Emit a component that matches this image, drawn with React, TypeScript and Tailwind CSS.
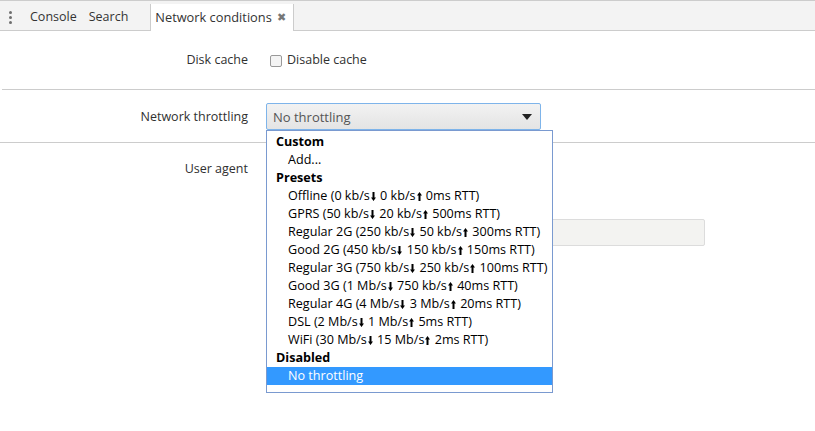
import { Fragment } from 'react';

type Row = { label: string; kind: 'group' | 'item'; selected?: boolean };

const options: Row[] = [
  { label: 'Custom', kind: 'group' },
  { label: 'Add...', kind: 'item' },
  { label: 'Presets', kind: 'group' },
  { label: 'Offline (0 kb/s⬇ 0 kb/s⬆ 0ms RTT)', kind: 'item' },
  { label: 'GPRS (50 kb/s⬇ 20 kb/s⬆ 500ms RTT)', kind: 'item' },
  { label: 'Regular 2G (250 kb/s⬇ 50 kb/s⬆ 300ms RTT)', kind: 'item' },
  { label: 'Good 2G (450 kb/s⬇ 150 kb/s⬆ 150ms RTT)', kind: 'item' },
  { label: 'Regular 3G (750 kb/s⬇ 250 kb/s⬆ 100ms RTT)', kind: 'item' },
  { label: 'Good 3G (1 Mb/s⬇ 750 kb/s⬆ 40ms RTT)', kind: 'item' },
  { label: 'Regular 4G (4 Mb/s⬇ 3 Mb/s⬆ 20ms RTT)', kind: 'item' },
  { label: 'DSL (2 Mb/s⬇ 1 Mb/s⬆ 5ms RTT)', kind: 'item' },
  { label: 'WiFi (30 Mb/s⬇ 15 Mb/s⬆ 2ms RTT)', kind: 'item' },
  { label: 'Disabled', kind: 'group' },
  { label: 'No throttling', kind: 'item', selected: true },
];

// small thick arrow used by the throughput figures
function Arrow({ down }: { down: boolean }) {
  return (
    <svg width="5" height="9" viewBox="0 0 5 9" className="mx-[1px] inline-block align-[-1px]">
      <path
        d={down ? 'M1.5 0 H3.5 V5.5 H5 L2.5 9 L0 5.5 H1.5 Z' : 'M1.5 9 H3.5 V3.5 H5 L2.5 0 L0 3.5 H1.5 Z'}
        fill="currentColor"
      />
    </svg>
  );
}

function Arrowed({ text }: { text: string }) {
  const parts = text.split(/([⬇⬆])/);
  return (
    <>
      {parts.map((p, i) =>
        p === '⬇' || p === '⬆' ? <Arrow key={i} down={p === '⬇'} /> : <Fragment key={i}>{p}</Fragment>
      )}
    </>
  );
}

function Toolbar() {
  return (
    <div className="flex h-[31px] items-end border-t border-b border-[#cccccc] bg-[#f3f3f3] text-[12.5px] text-[#333]">
      <div className="flex h-full w-[18px] flex-col items-center justify-center gap-[2px] pl-[2px] pt-[3px]">
        <span className="h-[3px] w-[3px] rounded-full bg-[#6e6e6e]" />
        <span className="h-[3px] w-[3px] rounded-full bg-[#6e6e6e]" />
        <span className="h-[3px] w-[3px] rounded-full bg-[#6e6e6e]" />
      </div>
      <div className="flex h-full items-center pl-[12px] pr-[12px] pt-[3px]">Console</div>
      <div className="flex h-full items-center pr-[22px] pt-[3px]">Search</div>
      <div className="mb-[-1px] flex h-[27px] items-center gap-[5px] border-x border-[#cccccc] bg-white pl-[4px] pr-[7px] text-[12.8px]">
        <span>Network conditions</span>
        <span className="text-[11px] text-[#777]">✖</span>
      </div>
    </div>
  );
}

export default function App() {
  return (
    <div
      className="relative h-[431px] w-[815px] overflow-hidden bg-white text-[12.5px] text-[#303030]"
      style={{ fontFamily: '"Open Sans", "Noto Sans", sans-serif' }}
    >
      <Toolbar />

      <div className="flex h-[58px] items-center pt-[1px]">
        <div className="w-[248px] text-right">Disk cache</div>
        <label className="ml-[22px] flex items-center gap-[5px]">
          <span className="h-[12px] w-[12px] rounded-[2px] border border-[#999] bg-[#f4f4f4]" />
          Disable cache
        </label>
      </div>
      <div className="ml-[2px] border-t border-[#cccccc]" />

      <div className="flex h-[52px] items-center">
        <div className="w-[248px] pt-[2px] text-right">Network throttling</div>
        <div className="ml-[18px] mt-[1px] flex h-[27px] w-[275px] items-center justify-between rounded-[2px] border border-[#7eb4ea] bg-gradient-to-b from-[#f2f2f2] to-[#e4e4e4] pl-[6px] pr-[8px] text-[#555]">
          <span className="pt-[3px] text-[13px]">No throttling</span>
          <svg width="10" height="6" viewBox="0 0 10 6">
            <path d="M0 0 L10 0 L5 6 Z" fill="#222" />
          </svg>
        </div>
      </div>
      <div className="border-t border-[#cccccc]" />

      <div className="flex items-start pt-[17px]">
        <div className="w-[248px] text-right">User agent</div>
        <div className="ml-[18px] flex flex-col">
          <div className="h-[59px]" />
          <div className="h-[27px] w-[439px] rounded-[2px] border border-[#dcdcdc] bg-[#f3f3f1]" />
        </div>
      </div>

      <div className="absolute left-[266px] top-[130px] w-[287px] border border-[#7a9ad0] bg-white pb-[7px] pt-[2px] text-[12.6px] text-black">
        {options.map((o) => (
          <div
            key={o.label}
            className={
              o.kind === 'group'
                ? 'h-[18px] pl-[9px] font-bold leading-[18px]'
                : o.selected
                  ? 'h-[18px] bg-[#3399ff] pl-[21px] leading-[18px] text-white'
                  : 'h-[18px] pl-[21px] leading-[18px]'
            }
          >
            <Arrowed text={o.label} />
          </div>
        ))}
      </div>
    </div>
  );
}
